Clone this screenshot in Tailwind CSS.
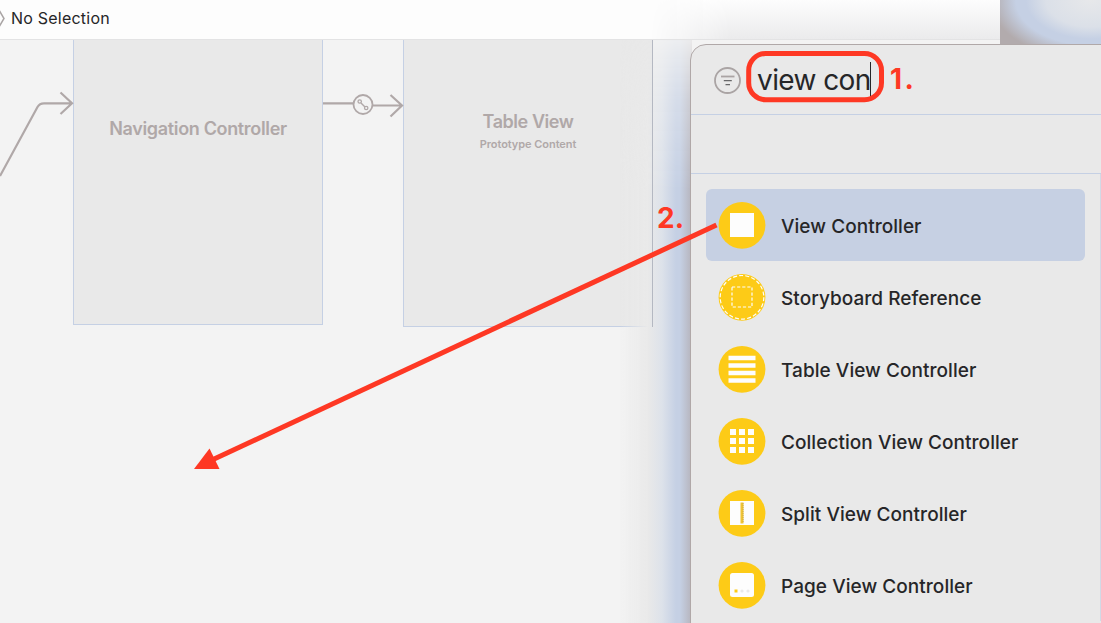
<!DOCTYPE html>
<html lang="en">
<head>
<meta charset="utf-8">
<title>Storyboard library</title>
<script src="https://cdn.jsdelivr.net/npm/@tailwindcss/browser@4"></script>
</head>
<body class="relative h-[623px] w-[1101px] overflow-hidden bg-[#f3f3f3] font-['Inter','Liberation_Sans',sans-serif] text-[#262628]">
  <div class="absolute top-0 right-0 h-[46px] w-[101px] bg-[radial-gradient(ellipse_100px_60px_at_90%_0%,#e7e8ea_0%,#dbe0e8_45%,#c5d0e4_65%,#c5d0e4_75%,#b2abad_100%)]"></div>
  <main class="flex h-full w-[1000px] flex-col">
    <header class="relative flex h-10 shrink-0 items-center border-b border-[#e3e3e4] bg-[#fdfdfd] pb-[3px]">
      <svg class="h-5 w-[11px] shrink-0" viewBox="0 0 11 20" fill="none" stroke="#a9a4a4" stroke-width="1.5"><path d="M-1 2 4 10.500-1 19"/></svg>
      <span class="text-[16px] tracking-[0.220px] whitespace-nowrap">No Selection</span>
      <div class="absolute right-0 bottom-0 h-full w-[350px] bg-linear-to-b from-[#fdfdfd] to-[#ebebec] mask-[linear-gradient(90deg,transparent,black_80px)]"></div>
    </header>
    <section class="relative flex-1 bg-[#f3f3f3] text-center text-[#b0a8a8]">
      <div class="absolute top-0 left-[73px] h-[285px] w-[250px] border-x border-b border-[#c5d0e4] bg-[#e9e9e9] pt-[77px]">
        <p class="text-[18px] leading-6 font-semibold tracking-[-0.340px] whitespace-nowrap">Navigation Controller</p>
      </div>
      <div class="absolute top-0 left-[403px] h-[287px] w-[250px] border-x border-b border-[#c5d0e4] bg-[#e9e9e9] pt-[70px]">
        <p class="text-[18px] leading-6 font-semibold tracking-[-0.440px]">Table View</p>
        <p class="text-[11px] leading-[21px] font-semibold tracking-[-0.050px]">Prototype Content</p>
      </div>
    </section>
  </main>
  <div class="absolute top-[40px] left-[620px] h-[583px] w-[72px] bg-[linear-gradient(90deg,#e9e9e900_0px,#e9e9e9_28px,#dde2ea_42px,#c5d0e4_56px,#c5d0e4_60px,#b8b8c2_70px,#b0a8a8_72px)] mask-[linear-gradient(180deg,rgba(0,0,0,.15),rgba(0,0,0,.65)_60px,black_150px)]"></div>
  <div class="absolute top-[40px] left-[652px] h-[287px] w-px bg-[#b4b8c2]"></div>

  <aside class="absolute top-[44px] left-[690px] flex h-[590px] w-[425px] flex-col rounded-tl-[16px] border border-[#b0a8a8] bg-[#e9e9e9]">
    <div class="flex h-[70px] shrink-0 items-center border-b border-[#c5d0e4] pl-[23px]">
      <svg class="h-7 w-7 shrink-0" viewBox="0 0 28 28" fill="none" stroke="#aaa4a4" stroke-width="1.800"><circle cx="13.500" cy="14.500" r="12.500"/><path d="M7 10.500h13.500"/><path stroke="#68686a" stroke-width="1.300" d="M9.800 14.700h8M11.500 18.700h4.500"/></svg>
      <span class="ml-[15px] text-[28px] leading-9 tracking-[-0.600px] whitespace-nowrap">view con</span>
      <span class="-ml-px h-[35px] w-px bg-[#262628]"></span>
    </div>
    <div class="h-[59px] shrink-0 border-b border-[#c5d0e4]"></div>
    <ul class="flex w-[410px] flex-col border-r border-[#d2d9e5] pt-[15px] pr-[15px] pl-[15px] text-[19px] leading-7 font-[450] tracking-[0.050px]">
      <li class="flex h-[72px] items-center gap-[15px] rounded-md bg-[#c6d0e3] pl-3">
        <svg class="h-12 w-12" viewBox="0 0 48 48"><circle cx="24" cy="24.300" r="23.400" fill="#fdcb17"/><path fill="#fdfdfd" d="M12 12h24v24H12z"/></svg>
        <span class="pt-[3px] whitespace-nowrap">View Controller</span>
      </li>
      <li class="flex h-[72px] items-center gap-[15px] pl-3">
        <svg class="h-12 w-12" viewBox="0 0 48 48" fill="none"><circle cx="24" cy="24.300" r="23.400" fill="#fdcb17"/><circle cx="24" cy="24.300" r="21.800" stroke="#fdfdfd" stroke-width="1.200" stroke-dasharray="4 2.200"/><path stroke="#fdfdfd" stroke-width="1.200" stroke-dasharray="3.200 1.900" d="M14 14h20v20H14z"/></svg>
        <span class="pt-[3px] whitespace-nowrap">Storyboard Reference</span>
      </li>
      <li class="flex h-[72px] items-center gap-[15px] pl-3">
        <svg class="h-12 w-12" viewBox="0 0 48 48"><circle cx="24" cy="24.300" r="23.400" fill="#fdcb17"/><path stroke="#fdfdfd" stroke-width="4.400" d="M10.500 13h27M10.500 20.500h27M10.500 28h27M10.500 35.500h27"/></svg>
        <span class="pt-[3px] whitespace-nowrap">Table View Controller</span>
      </li>
      <li class="flex h-[72px] items-center gap-[15px] pl-3">
        <svg class="h-12 w-12" viewBox="0 0 48 48"><circle cx="24" cy="24.300" r="23.400" fill="#fdcb17"/><path fill="#fdfdfd" d="M12 12h6v6h-6zM21 12h6v6h-6zM30 12h6v6h-6zM12 21h6v6h-6zM21 21h6v6h-6zM30 21h6v6h-6zM12 30h6v6h-6zM21 30h6v6h-6zM30 30h6v6h-6z"/></svg>
        <span class="pt-[3px] whitespace-nowrap">Collection View Controller</span>
      </li>
      <li class="flex h-[72px] items-center gap-[15px] pl-3">
        <svg class="h-12 w-12" viewBox="0 0 48 48" fill="none"><circle cx="24" cy="24.300" r="23.400" fill="#fdcb17"/><path fill="#fdfdfd" d="M12 12h24v24H12z"/><path stroke="#f0c434" stroke-width="3" d="M24 13.500v21"/><path stroke="#c9a94a" stroke-dasharray="1 1" d="M25 14v20"/></svg>
        <span class="pt-[3px] whitespace-nowrap">Split View Controller</span>
      </li>
      <li class="flex h-[72px] items-center gap-[15px] pl-3">
        <svg class="h-12 w-12" viewBox="0 0 48 48"><circle cx="24" cy="24.300" r="23.400" fill="#fdcb17"/><rect x="12" y="12" width="24" height="24" rx="2.500" fill="#fdfdfd"/><path fill="#fdcb17" d="M16.500 28.500h3v3h-3z"/><circle cx="24" cy="30" r="1.600" fill="#e9e9e9"/><circle cx="30" cy="30" r="1.600" fill="#e9e9e9"/></svg>
        <span class="pt-[3px] whitespace-nowrap">Page View Controller</span>
      </li>
    </ul>
  </aside>

  <svg class="absolute inset-0 h-[623px] w-[1101px]" viewBox="0 0 1101 623" fill="none">
    <g stroke="#b0a8a8" stroke-width="2.200">
      <path d="M0 176 37.500 107Q39.500 103.300 44 103.300H72M60.500 92.500 72 103.300 60.500 114"/>
      <path d="M323 103.300h30.500M373 105.500h29M390.500 95 402 105.500 390.500 116.500"/>
      <circle cx="363" cy="104.500" r="9.500" stroke-width="1.800"/>
      <path stroke-width="1.500" d="m361 103 4 4"/>
      <circle cx="359.700" cy="101.500" r="1.700" stroke-width="1.300"/><circle cx="366.200" cy="108" r="1.700" stroke-width="1.300"/>
    </g>
    <rect x="748.700" y="53.500" width="132.800" height="46.300" rx="17" stroke="#fe3824" stroke-width="5"/>
    <path stroke="#fe3824" stroke-width="5" d="M716.500 225 212 460"/>
    <path fill="#fe3824" d="M194 469 209.500 448.500 219.500 469z"/>
  </svg>
  <span class="absolute top-[63px] left-[890px] text-[28px] leading-8 font-bold tracking-[2.500px] text-[#fe3824]">1.</span>
  <span class="absolute top-[202px] left-[657px] text-[28px] leading-8 font-bold text-[#fe3824]">2.</span>
</body>
</html>
